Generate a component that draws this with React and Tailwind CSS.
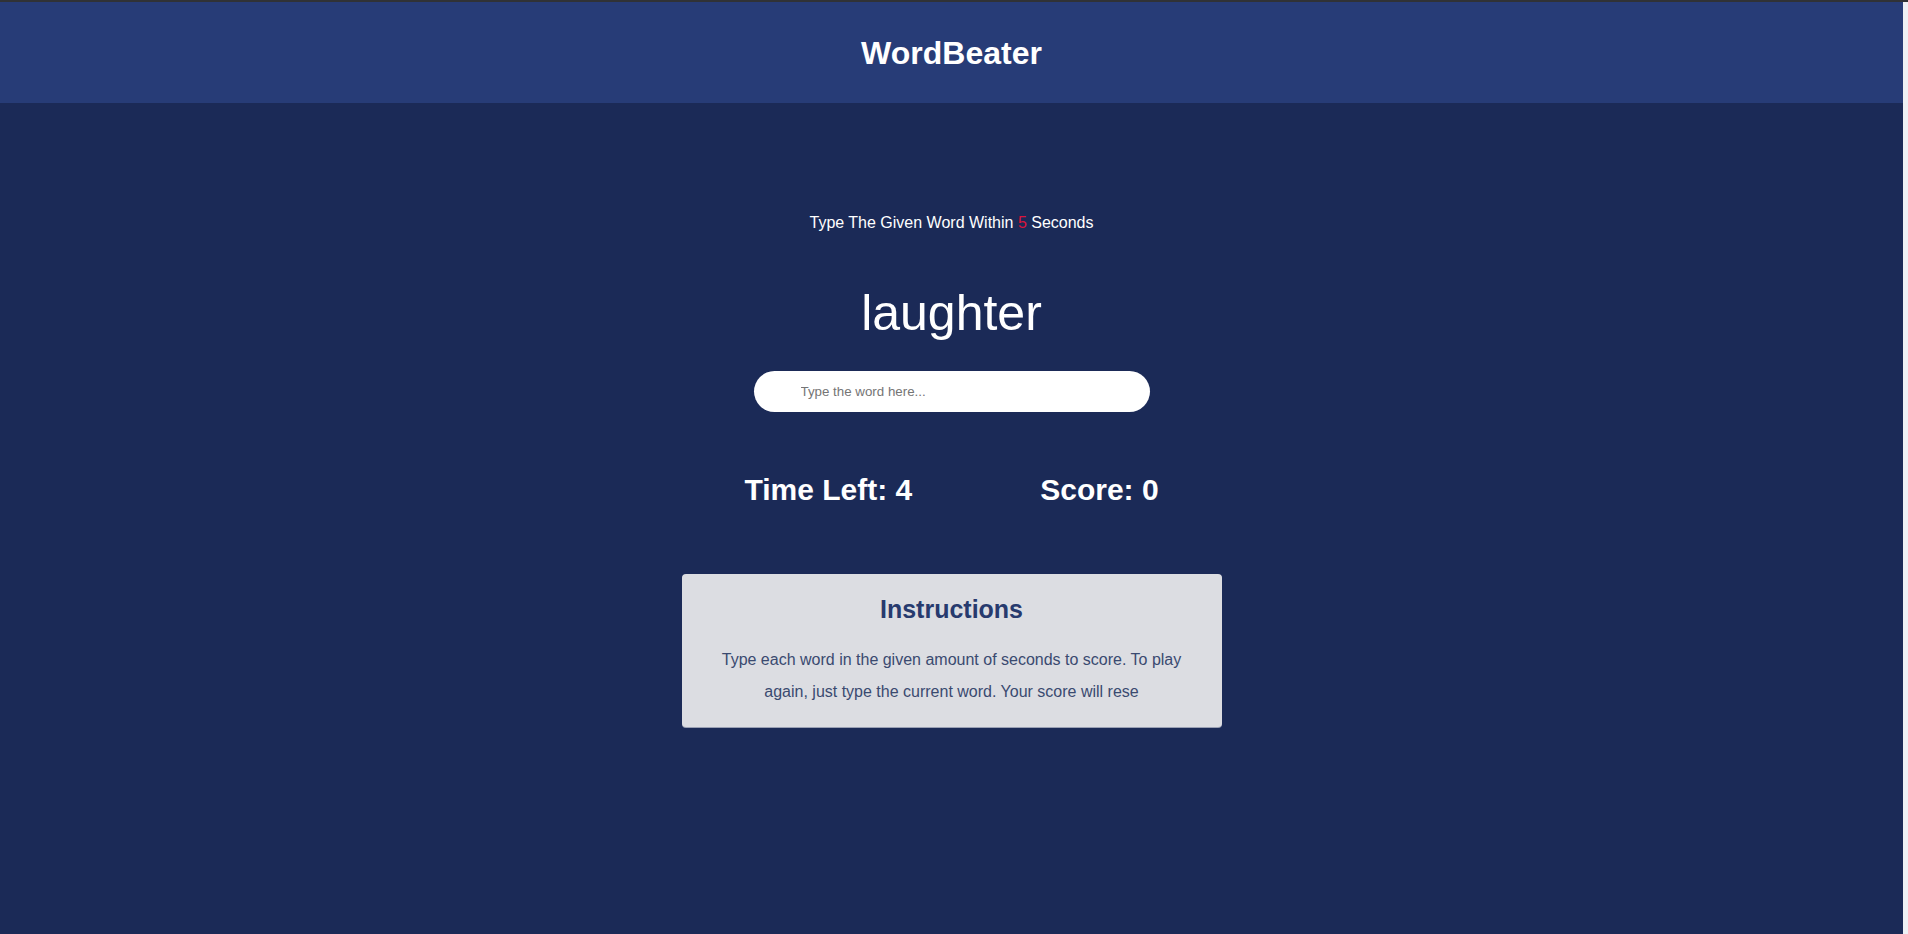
import React, { useState } from 'react';

export default function App() {
    const [word, setWord] = useState('');

    return (
        <div className="flex h-screen flex-col bg-[#eef0f4]" style={{ fontFamily: '"Liberation Sans", Arial, sans-serif' }}>
            <div className="h-[2px] w-full bg-[#303236]" />
            <div className="flex flex-1">
                <div className="flex flex-1 flex-col bg-[#1b2a57]">
                    <header className="flex h-[101px] items-center justify-center bg-[#273c77]">
                        <h1 className="text-[32px] font-bold text-white">WordBeater</h1>
                    </header>

                    <main className="flex flex-col items-center pt-[108px] text-white">
                        <p className="text-base">
                            Type The Given Word Within <span className="text-[#dc143c]">5</span> Seconds
                        </p>

                        <h2 className="mt-[50px] text-[50px] leading-[57px]">laughter</h2>

                        <input
                            type="text"
                            value={word}
                            onChange={(e) => setWord(e.target.value)}
                            placeholder="Type the word here..."
                            className="mt-[29px] h-[41px] w-[396px] rounded-full bg-white pl-[47px] text-[13.33px] text-gray-800 placeholder-[#757575] outline-none"
                        />

                        <div className="mt-[55px] flex gap-[128px] text-[30px] font-bold">
                            <span>Time Left: 4</span>
                            <span>Score: 0</span>
                        </div>

                        <div className="mt-[62px] w-[540px] rounded bg-[#dcdde2] px-5 pt-[17px] pb-[19px] text-center shadow-[0_1px_0_#9aa0b4]">
                            <h3 className="text-[25px] font-bold text-[#273a6e]">Instructions</h3>
                            <p className="mt-[15px] text-base leading-8 text-[#3a4a70]">
                                Type each word in the given amount of seconds to score. To play again, just type the current word. Your score will rese
                            </p>
                        </div>
                    </main>
                </div>
                <div className="w-[5px]" />
            </div>
        </div>
    );
}
